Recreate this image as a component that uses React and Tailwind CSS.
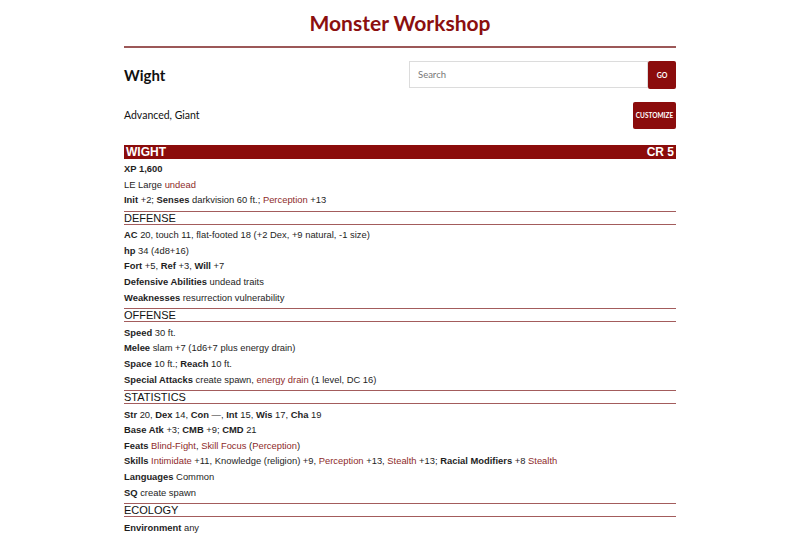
import React from "react";

const RED = "text-[#8b0f0f]";

function L({ children }) {
  return <span className="text-[#8e2b2b]">{children}</span>;
}

function B({ children }) {
  return <b className="font-bold">{children}</b>;
}

function Row({ children }) {
  return <p className="h-[15.6px] text-[9.4px] leading-[15.6px] text-[#1e1e1e]">{children}</p>;
}

function Section({ title }) {
  return (
    <h3 className="mt-[3px] mb-[2.5px] border-y border-[#a35c5c] text-[11px] leading-[12px] text-[#111] uppercase">
      {title}
    </h3>
  );
}

export default function App() {
  return (
    <div className="min-h-screen bg-white" style={{ fontFamily: "'Liberation Sans', Arial, sans-serif" }}>
      <div className="mx-auto w-[552px]">
        {/* Header */}
        <h1
          className={`pt-[9px] pb-[10px] text-center text-[21px] leading-[27px] font-bold ${RED}`}
          style={{ fontFamily: "Lato, sans-serif" }}
        >
          Monster Workshop
        </h1>
        <div className="h-[2px] bg-[#9c5858]" />

        <div style={{ fontFamily: "Lato, sans-serif" }}>
          <div className="mt-[13px] flex items-center justify-between">
            <h2 className="text-[15px] font-bold text-[#111]">Wight</h2>
            <div className="flex">
              <input
                className="h-[27px] w-[239px] border border-[#dcdcdc] px-[8px] text-[9.5px] text-[#333] placeholder-[#777] outline-none"
                placeholder="Search"
              />
              <button className="h-[28px] w-[28px] rounded-[2px] bg-[#8b0c0c] text-[7px] font-bold text-white">
                GO
              </button>
            </div>
          </div>

          <div className="mt-[13px] flex items-center justify-between">
            <p className="pt-[1px] text-[10.5px] text-[#111]">Advanced, Giant</p>
            <button className="h-[27px] w-[43px] rounded-[2px] bg-[#8b0c0c] text-[6.5px] font-bold text-white">
              CUSTOMIZE
            </button>
          </div>
        </div>

        {/* Stat block */}
        <div className="mt-[16px]">
          <div className="flex h-[14px] items-center justify-between bg-[#8b0c0b] px-[2px] text-[12px] font-bold text-white">
            <span>WIGHT</span>
            <span>CR 5</span>
          </div>
          <div className="mt-[2px]">
            <Row><B>XP 1,600</B></Row>
            <Row>LE Large <L>undead</L></Row>
            <Row><B>Init</B> +2; <B>Senses</B> darkvision 60 ft.; <L>Perception</L> +13</Row>
          </div>

          <Section title="Defense" />
          <Row><B>AC</B> 20, touch 11, flat-footed 18 (+2 Dex, +9 natural, -1 size)</Row>
          <Row><B>hp</B> 34 (4d8+16)</Row>
          <Row><B>Fort</B> +5, <B>Ref</B> +3, <B>Will</B> +7</Row>
          <Row><B>Defensive Abilities</B> undead traits</Row>
          <Row><B>Weaknesses</B> resurrection vulnerability</Row>

          <Section title="Offense" />
          <Row><B>Speed</B> 30 ft.</Row>
          <Row><B>Melee</B> slam +7 (1d6+7 plus energy drain)</Row>
          <Row><B>Space</B> 10 ft.; <B>Reach</B> 10 ft.</Row>
          <Row><B>Special Attacks</B> create spawn, <L>energy drain</L> (1 level, DC 16)</Row>

          <Section title="Statistics" />
          <Row><B>Str</B> 20, <B>Dex</B> 14, <B>Con</B> —, <B>Int</B> 15, <B>Wis</B> 17, <B>Cha</B> 19</Row>
          <Row><B>Base Atk</B> +3; <B>CMB</B> +9; <B>CMD</B> 21</Row>
          <Row><B>Feats</B> <L>Blind-Fight</L>, <L>Skill Focus</L> (<L>Perception</L>)</Row>
          <Row>
            <B>Skills</B> <L>Intimidate</L> +11, Knowledge (religion) +9, <L>Perception</L> +13, <L>Stealth</L> +13;{" "}
            <B>Racial Modifiers</B> +8 <L>Stealth</L>
          </Row>
          <Row><B>Languages</B> Common</Row>
          <Row><B>SQ</B> create spawn</Row>

          <Section title="Ecology" />
          <Row><B>Environment</B> any</Row>
        </div>
      </div>
    </div>
  );
}
